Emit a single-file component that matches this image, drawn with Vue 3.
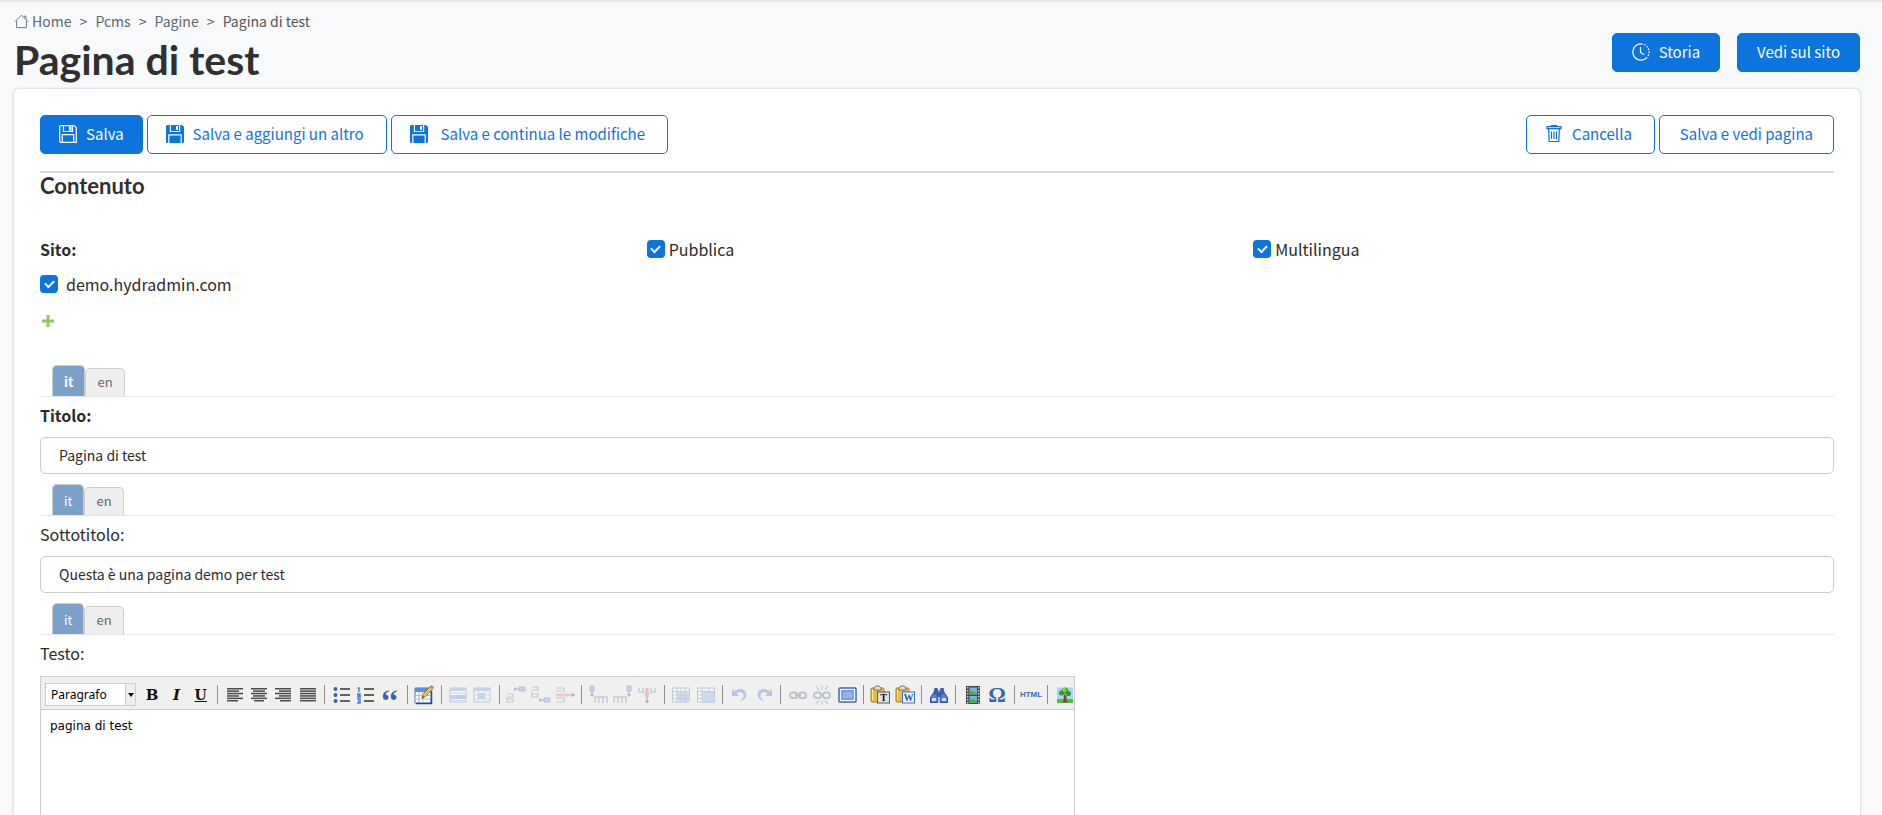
<script setup>
import { ref } from 'vue'

const crumbs = ['Home', 'Pcms', 'Pagine']
const title = ref('Pagina di test')
const subtitle = ref('Questa è una pagina demo per test')
const body = ref('pagina di test')
const demoSite = ref(true)
const published = ref(true)
const multilang = ref(true)

const groups = [
  ['bold', 'italic', 'underline'],
  ['left', 'center', 'right', 'justify'],
  ['bullets', 'numbers', 'quote'],
  ['edit'],
  ['rowProps', 'cellProps'],
  ['rowBefore', 'rowAfter', 'rowDelete'],
  ['colBefore', 'colAfter', 'colDelete'],
  ['split', 'merge'],
  ['undo', 'redo'],
  ['link', 'unlink', 'full'],
  ['pasteText', 'pasteWord'],
  ['search'],
  ['media', 'charmap'],
  ['html'],
  ['image'],
]
const disabledTools = ['rowProps', 'cellProps', 'rowBefore', 'rowAfter', 'rowDelete', 'colBefore', 'colAfter', 'colDelete', 'split', 'merge', 'undo', 'redo', 'link', 'unlink']

const lines = {
  left: [[4, 16], [4, 12], [4, 16], [4, 12], [4, 16], [4, 11]],
  center: [[4, 16], [6, 12], [4, 16], [6, 12], [4, 16], [7, 10]],
  right: [[4, 16], [8, 12], [4, 16], [8, 12], [4, 16], [9, 11]],
  justify: [[4, 16], [4, 16], [4, 16], [4, 16], [4, 16], [4, 16]],
}
const letters = { bold: 'B', italic: 'I', underline: 'U' }
</script>

<template>
  <div class="page">
    <header class="head">
      <div>
        <nav class="crumbs" aria-label="Breadcrumb">
          <svg class="home" viewBox="0 0 16 16" aria-hidden="true">
            <path d="M1 8.2 8 1.2l7 7M2.7 7v7.5h10.6V7M11 3.8V2.2h1.8v3.6" />
          </svg>
          <template v-for="c in crumbs" :key="c">
            <a href="#">{{ c }}</a><span class="sep">&gt;</span>
          </template>
          <span>Pagina di test</span>
        </nav>
        <h1>Pagina di test</h1>
      </div>
      <div class="head-actions">
        <button type="button" class="btn solid">
          <svg class="ico" viewBox="0 0 18 18" aria-hidden="true">
            <path d="M9 .9a8.1 8.1 0 1 0 5.200 14.300" />
            <path d="M9 .9a8.100 8.100 0 0 1 5.200 14.300" stroke-dasharray="1.700 1.300" />
            <path d="M8.500 4v5.500l3.800 2.300" />
          </svg>
          Storia
        </button>
        <button type="button" class="btn solid">Vedi sul sito</button>
      </div>
    </header>

    <main class="card">
      <div class="actions">
        <button type="button" class="btn solid">
          <svg class="ico" viewBox="0 0 18 18" aria-hidden="true">
            <path d="M1.500.7h13.800l2 2v14.600H1.500L.7 16.500V1.500zM4.500.9v5.600h9V.9M10.500 2v3.200h1.400V2zM3.300 17.200V9.600h11.400v7.600" />
          </svg>
          Salva
        </button>
        <button type="button" class="btn with-icon">
          <svg class="ico fill" viewBox="0 0 18 18" aria-hidden="true">
            <path d="M1 0h2.800v7h10.400V0h1.600L18 1.800V17l-1 1h-1.200V9.200H2.200V18H1l-1-1V1zM5 0h8v6H5zm5 1v4h2V1zM3.400 10.500h11.200V18H3.400z" />
          </svg>
          Salva e aggiungi un altro
        </button>
        <button type="button" class="btn with-icon wide">
          <svg class="ico fill" viewBox="0 0 18 18" aria-hidden="true">
            <path d="M1 0h2.800v7h10.400V0h1.600L18 1.800V17l-1 1h-1.200V9.200H2.200V18H1l-1-1V1zM5 0h8v6H5zm5 1v4h2V1zM3.400 10.500h11.200V18H3.400z" />
          </svg>
          Salva e continua le modifiche
        </button>
        <span class="grow"></span>
        <button type="button" class="btn with-icon">
          <svg class="ico" viewBox="0 0 18 18" aria-hidden="true">
            <path d="M2 1.700h14v2H2zM6.500 1.500V.5h5v1M3.600 4l.6 12.500h9.600L14.400 4M6.500 6.500v7.500M9 6.500v7.500M11.500 6.500v7.500" />
          </svg>
          Cancella
        </button>
        <button type="button" class="btn">Salva e vedi pagina</button>
      </div>

      <h2>Contenuto</h2>

      <div class="row">
        <fieldset class="sites">
          <legend>Sito:</legend>
          <label class="check roomy"><input v-model="demoSite" type="checkbox">demo.hydradmin.com</label>
          <button type="button" class="add" aria-label="Aggiungi">
            <svg viewBox="0 0 12 12" aria-hidden="true"><path d="M6 0v12M0 6h12" /></svg>
          </button>
        </fieldset>
        <label class="check"><input v-model="published" type="checkbox">Pubblica</label>
        <label class="check"><input v-model="multilang" type="checkbox">Multilingua</label>
      </div>

      <div class="tabs required">
        <button type="button" class="tab active">it</button><button type="button" class="tab">en</button>
      </div>
      <label class="field-label strong" for="title">Titolo:</label>
      <input id="title" v-model="title" class="text" type="text">

      <div class="tabs">
        <button type="button" class="tab active">it</button><button type="button" class="tab">en</button>
      </div>
      <label class="field-label" for="subtitle">Sottotitolo:</label>
      <input id="subtitle" v-model="subtitle" class="text" type="text">

      <div class="tabs">
        <button type="button" class="tab active">it</button><button type="button" class="tab">en</button>
      </div>
      <label class="field-label" for="body">Testo:</label>

      <div class="editor">
        <div class="toolbar">
          <div class="format">
            <select aria-label="Formato"><option>Paragrafo</option></select>
            <span class="arrow" aria-hidden="true"></span>
          </div>
          <div class="tools">
            <template v-for="(g, gi) in groups" :key="gi">
              <span v-if="gi" class="divider"></span>
              <button
                v-for="t in g" :key="t" type="button" class="tool"
                :disabled="disabledTools.includes(t)" :aria-label="t"
              >
                <span v-if="letters[t]" class="letter" :class="t">{{ letters[t] }}</span>
                <span v-else-if="t === 'charmap'" class="omega">Ω</span>
                <span v-else-if="t === 'html'" class="html">HTML</span>
                <svg v-else viewBox="0 0 24 24" aria-hidden="true">
                  <g v-if="lines[t]" fill="#4a4a50">
                    <rect v-for="(l, i) in lines[t]" :key="i" :x="l[0]" :y="5 + i * 2.400" :width="l[1]" height="1.500" />
                  </g>
                  <template v-else-if="t === 'bullets'">
                    <g fill="#3764b4"><circle cx="5.500" cy="6" r="2" /><circle cx="5.500" cy="12" r="2" /><circle cx="5.500" cy="18" r="2" /></g>
                    <path d="M10 6h10M10 12h10M10 18h10" stroke="#333" stroke-width="1.400" />
                  </template>
                  <template v-else-if="t === 'numbers'">
                    <path d="M3.500 5h1.500v4M3 11h3v1.500H4V14h3M3 16h3v4H3M4 18h2" fill="none" stroke="#4a80d8" stroke-width="1.500" />
                    <path d="M10 6h10M10 12h10M10 18h10" stroke="#333" stroke-width="1.400" />
                  </template>
                  <path v-else-if="t === 'quote'" fill="#3564b0" d="M11 7.500C6 8 4.500 11 5 14.500c.4 3.500 5.500 3 5.500 0 0-1.800-1.200-2.800-2.800-2.600C7.500 10 9 8.800 11 8.500zM19 7.500c-5 .5-6.500 3.500-6 7 .4 3.500 5.500 3 5.500 0 0-1.800-1.200-2.800-2.800-2.600-.2-1.900 1.300-3.100 3.300-3.400z" />
                  <template v-else-if="t === 'edit'">
                    <path d="M3 5h16v15H3z" fill="#fff" stroke="#5878b0" /><path d="M3 5h16v4H3z" fill="#5b8ce8" />
                    <path d="M3 12.500h15M3 16h15M7 9v10M11 9v10" stroke="#a8bce0" /><path d="M19.500 8v12.500H4" fill="none" stroke="#254a86" stroke-width="1.500" />
                    <path d="m10 15 1-3.500 7-8 2.800 2.300-7.300 8z" fill="#e9c257" stroke="#866820" stroke-width=".8" /><path d="m18 3.500 1.500-1.600 2.700 2.300L20.800 5.800z" fill="#d9786a" /><path d="m10 15 .7-2 1.500 1.200z" fill="#222" />
                  </template>
                  <template v-else-if="t === 'rowProps'">
                    <path d="M4 5h16v14H4z" fill="#fff" stroke="#5d7fb8" /><path d="M4 5h16v3H4z" fill="#7c9de0" /><path d="M3.500 12h17v4h-17z" fill="#6895e6" /><path d="M4 10h16M4 17.500h16" stroke="#9ab0d8" />
                  </template>
                  <template v-else-if="t === 'cellProps'">
                    <path d="M4 5h16v14H4z" fill="#fff" stroke="#5d7fb8" /><path d="M4 5h16v3H4z" fill="#7c9de0" /><path d="M8 10h7v6H8z" fill="#6895e6" /><path d="M4 12h16M4 16h16M8 8v11M15 8v11" stroke="#9ab0d8" />
                  </template>
                  <template v-else-if="t === 'rowBefore'">
                    <path d="M3 11h6v3H3M3 14v5h6v-3H3" fill="none" stroke="#7185ab" stroke-width="1.200" />
                    <path d="M15 4h6v4h-6z" fill="#79a1ec" stroke="#4068b0" /><path d="M15 6h-4" stroke="#444" /><path d="m9.500 6 2.500-2v4z" fill="#444" />
                  </template>
                  <template v-else-if="t === 'rowAfter'">
                    <path d="M3 4h6v3H3M3 8v6h6v-3H3" fill="none" stroke="#7185ab" stroke-width="1.200" />
                    <path d="M15 15h6v4h-6z" fill="#79a1ec" stroke="#4068b0" /><path d="M15 17h-4" stroke="#444" /><path d="m9.500 17 2.500-2v4z" fill="#444" />
                  </template>
                  <template v-else-if="t === 'rowDelete'">
                    <path d="M3 5h8v3H3M3 15h8v4H3" fill="none" stroke="#7185ab" stroke-width="1.200" />
                    <path d="M3 10.500h12v3H3z" fill="#ee7e7e" /><path d="M15 12h4" stroke="#333" /><path d="m22 12-3-2.200v4.400z" fill="#333" />
                  </template>
                  <template v-else-if="t === 'colBefore'">
                    <path d="M8 20v-6h12v6M12 14v6M16 14v6" fill="none" stroke="#7185ab" stroke-width="1.400" />
                    <path d="M3 3h4v5H3z" fill="#79a1ec" stroke="#4068b0" /><path d="M5 8v4" stroke="#444" /><path d="M5 14 3 11h4z" fill="#444" />
                  </template>
                  <template v-else-if="t === 'colAfter'">
                    <path d="M3 20v-6h12v6M7 14v6M11 14v6" fill="none" stroke="#7185ab" stroke-width="1.400" />
                    <path d="M16 3h4v5h-4z" fill="#79a1ec" stroke="#4068b0" /><path d="M18 8v4" stroke="#444" /><path d="m18 14-2-3h4z" fill="#444" />
                  </template>
                  <template v-else-if="t === 'colDelete'">
                    <path d="M4 5v4h4V5M16 5v4h4V5" fill="none" stroke="#7185ab" stroke-width="1.400" />
                    <path d="M10.500 5h3v9h-3z" fill="#f06060" stroke="#999" stroke-width=".6" /><path d="M8 9l2.500 3M16 9l-2.500 3" stroke="#7185ab" /><path d="M12 14v4" stroke="#333" /><path d="m12 20.500-2.200-3h4.400z" fill="#333" />
                  </template>
                  <template v-else-if="t === 'split'">
                    <path d="M3.500 5h17v14h-17z" fill="#fff" stroke="#5d7fb8" /><path d="M8 9h12.500v10H8z" fill="#94b3ee" /><path d="M3.500 8.500h17M3.500 12h17M3.500 15.500h17M8 5v14M12 5v14M16 5v14" stroke="#7892c0" />
                  </template>
                  <template v-else-if="t === 'merge'">
                    <path d="M3.500 5h17v14h-17z" fill="#fff" stroke="#5d7fb8" /><path d="M8 9h12.500v10H8z" fill="#8fb2f3" stroke="#6c8cd0" /><path d="M3.500 8.500h17M3.500 12H8M3.500 15.500H8M8 5v4M15 5v4" stroke="#7892c0" />
                  </template>
                  <path v-else-if="t === 'undo'" d="M4 6v7h7L8.600 10.500c4-3 7.400-1 6.900 2.500-.3 2-1.500 3.500-3.500 5.500 4.500-1.500 6.500-4 6.300-7C18 6 11.500 4 6.400 8.400z" fill="#3f74e0" />
                  <path v-else-if="t === 'redo'" d="M20 6v7h-7l2.400-2.500c-4-3-7.400-1-6.900 2.500.3 2 1.500 3.500 3.500 5.500-4.500-1.500-6.500-4-6.300-7C6 6 12.500 4 17.600 8.400z" fill="#3f74e0" />
                  <template v-else-if="t === 'link' || t === 'unlink'">
                    <g fill="none" stroke="#5f7290" stroke-width="2">
                      <rect x="4" y="9.500" width="7" height="5.500" rx="2.600" /><rect x="13" y="9.500" width="7" height="5.500" rx="2.600" />
                      <path v-if="t === 'link'" d="M9 12.200h6" />
                    </g>
                    <path v-if="t === 'unlink'" d="m6 3 3 4M12 2v5M18 3l-3 4M6 21l3-4M12 22v-5M18 21l-3-4" stroke="#8b929c" stroke-width="1.300" />
                  </template>
                  <template v-else-if="t === 'full'">
                    <rect x="4" y="5" width="17" height="14" rx="1" fill="#fff" stroke="#3768bd" stroke-width="1.500" /><rect x="6.800" y="7.800" width="11.400" height="8.400" fill="#8db5f5" stroke="#4679d2" />
                  </template>
                  <template v-else-if="t === 'pasteText' || t === 'pasteWord'">
                    <rect x="3" y="5" width="13" height="14" rx="1" fill="#edbb45" stroke="#a87a20" /><path d="M6 7V5l2-2h3l2 2v2z" fill="#e5e0d0" stroke="#77705c" />
                    <path d="M4.500 7v10" stroke="#fff0a0" />
                    <rect x="9.500" y="9" width="12" height="11" :fill="t === 'pasteText' ? '#e2e2e2' : '#f4f8ff'" :stroke="t === 'pasteText' ? '#555' : '#3d6abb'" />
                    <text x="15.500" y="18" text-anchor="middle" :fill="t === 'pasteText' ? '#111' : '#2456b4'" class="mark">{{ t === 'pasteText' ? 'T' : 'W' }}</text>
                  </template>
                  <template v-else-if="t === 'search'">
                    <path d="m6 11 1.500-6h3L12 9l1.500-4h3L18 11zM10 10h4v4h-4z" fill="#3c65ae" />
                    <path d="M3.500 19.500v-5L6 10.500h3.500l1.300 3.500v5.500zM20.500 19.500v-5L18 10.500h-3.500L13.200 14v5.500z" fill="#5782ce" stroke="#2d4f90" /><path d="M5 16.500h4M15 16.500h4" stroke="#e4edfb" stroke-width="2.500" />
                  </template>
                  <template v-else-if="t === 'media'">
                    <path d="M5 3h14v18H5z" fill="#474747" /><path d="M8.500 4.500h7.500v7H8.500zM8.500 13h7.500v7H8.500z" fill="#6db7ec" /><path d="m8.500 11.500 0-3 3-1 4.500 3v1zM8.500 20v-3l4-1.500 3.500 3V20z" fill="#4fb04a" />
                    <path d="M6.700 4v17M17.700 4v17" stroke="#ddd" stroke-width="1.300" stroke-dasharray="1.500 1.500" />
                  </template>
                  <template v-else-if="t === 'image'">
                    <path d="M3.500 4h17v16h-17z" fill="#a8d4f8" stroke="#e8f0f8" /><path d="M4 16h16v4H4z" fill="#58b83c" />
                    <path d="M10.800 12h2.600l.3 6 1.800 1.500H8.800l1.800-1.500z" fill="#804a22" />
                    <circle cx="12" cy="8" r="3.500" fill="#4daa30" /><circle cx="8.500" cy="10" r="2.500" fill="#3c9028" /><circle cx="15.500" cy="10.500" r="2.500" fill="#3c9028" /><circle cx="11" cy="7" r="2" fill="#83cf4b" />
                  </template>
                </svg>
              </button>
            </template>
          </div>
        </div>
        <textarea id="body" v-model="body"></textarea>
      </div>
    </main>
  </div>
</template>

<style>
body {
  margin: 0;
  background: #f8f9fb;
}
</style>

<style scoped>
* {
  box-sizing: border-box;
}
.page {
  min-height: 100vh;
  display: flex;
  flex-direction: column;
  border-top: 2px solid #e6e9ea;
  padding: 0 22px 0 14px;
  font-family: "Noto Sans CJK SC", "Open Sans", sans-serif;
  font-size: 16px;
  line-height: 24px;
  color: #2b2b2b;
}
button, input, textarea, select {
  font: inherit;
  margin: 0;
}
.head {
  display: flex;
  justify-content: space-between;
  height: 87px;
}
.crumbs {
  display: flex;
  align-items: center;
  height: 20px;
  margin-top: 9px;
  font-size: 14px;
  line-height: 20px;
  color: #555;
}
.crumbs a {
  color: #5d6770;
  text-decoration: none;
}
.crumbs .sep {
  width: 24px;
  text-align: center;
}
.home {
  width: 15px;
  height: 15px;
  margin-right: 3px;
  fill: none;
  stroke: #6b747c;
}
h1, h2 {
  margin: 0;
  font-family: Lato, "Open Sans", sans-serif;
  font-weight: 700;
  color: #303030;
}
h1 {
  font-size: 41px;
  line-height: 48px;
  margin-top: 5px;
}
.head-actions {
  display: flex;
  gap: 17px;
  margin-top: 31px;
}
.btn {
  display: inline-flex;
  align-items: center;
  gap: 9px;
  height: 39px;
  padding: 0 20px 2px;
  border: 1px solid #0d74de;
  border-radius: 5px;
  background: #fff;
  color: #0d74de;
  font-size: 15px;
  line-height: 24px;
  white-space: nowrap;
}
.btn.with-icon {
  padding: 0 22px 2px 18px;
}
.btn.wide {
  gap: 13px;
}
.btn.solid {
  padding: 0 18px 2px;
  background: #0d74de;
  color: #fff;
}
.head-actions .btn.solid {
  padding: 0 19px 2px;
}
.ico {
  width: 18px;
  height: 18px;
  fill: none;
  stroke: currentColor;
  stroke-width: 1.2;
}
.ico.fill {
  fill: currentColor;
  fill-rule: evenodd;
  stroke: none;
}
.card {
  flex: 1;
  display: flex;
  flex-direction: column;
  padding: 26px 26px 0;
  border-radius: 5px 5px 0 0;
  background: #fff;
  box-shadow: 0 0 3px rgba(0, 0, 0, .25);
}
.actions {
  display: flex;
  gap: 4px;
  padding-bottom: 17px;
  border-bottom: 2px solid #d9d9d9;
}
.grow {
  flex: 1;
}
h2 {
  font-size: 22px;
  line-height: 26px;
}
.row {
  display: grid;
  grid-template-columns: repeat(3, 1fr);
  gap: 26px;
  align-items: start;
  margin-top: 38px;
}
.sites {
  display: flex;
  flex-direction: column;
  gap: 13px;
  margin: 0;
  padding: 0;
  border: 0;
}
legend {
  padding: 0;
  margin-bottom: 11px;
  font-weight: 700;
}
.check {
  display: flex;
  align-items: center;
  gap: 4px;
}
.check.roomy {
  gap: 8px;
}
.check input {
  appearance: none;
  width: 18px;
  height: 18px;
  border-radius: 4px;
  background: #0d74de;
  display: grid;
  place-items: center;
}
.check input:checked::before {
  content: "";
  width: 7px;
  height: 4px;
  border: solid #fff;
  border-width: 0 0 2px 2px;
  transform: translateY(-1px) rotate(-45deg);
}
.add {
  display: block;
  width: 16px;
  height: 24px;
  padding: 0 0 0 2px;
  border: 0;
  background: none;
}
.add svg {
  display: block;
  width: 12px;
  height: 12px;
  stroke: #8ccb5c;
  stroke-width: 3;
}
.tabs {
  display: flex;
  align-items: flex-end;
  height: 32px;
  margin-top: 10px;
  padding-left: 12px;
  border-bottom: 1px solid #e6e6e6;
}
.tabs.required {
  margin-top: 32px;
}
.tab {
  height: 28px;
  padding: 0 11px 2px;
  border: 1px solid #ccc;
  border-bottom: 0;
  border-radius: 5px 5px 0 0;
  background: #eee;
  color: #666;
  font-size: 13px;
  line-height: 24px;
}
.tab.active {
  height: 31px;
  padding: 1px 11px 0;
  background: #7ba0c9;
  color: #fff;
}
.required .active {
  font-weight: 700;
}
.field-label {
  margin: 6px 0 10px;
  align-self: flex-start;
}
.strong {
  font-weight: 700;
}
.text {
  width: 100%;
  height: 37px;
  padding: 0 18px 2px;
  border: 1px solid #ccc;
  border-radius: 5px;
  background: #fff;
  color: #2b2b2b;
  font-size: 14px;
}
.editor {
  flex: 1;
  display: flex;
  flex-direction: column;
  width: 100%;
  max-width: 1035px;
  margin-top: 1px;
  border: solid #ccc;
  border-width: 1px 1px 0;
}
.toolbar {
  display: flex;
  align-items: center;
  height: 33px;
  padding: 3px 0 0 4px;
  overflow: hidden;
  border-bottom: 1px solid #ccc;
  background: #f0f0ee;
}
.format {
  display: flex;
  flex: none;
  width: 91px;
  height: 23px;
  margin-right: 4px;
  border: 1px solid #ccc;
  background: #fff;
}
.format select {
  flex: 1;
  min-width: 0;
  appearance: none;
  padding: 0 0 0 5px;
  border: 0;
  background: #fff;
  color: #000;
  font: 12px/20px "Noto Sans", sans-serif;
}
.arrow {
  display: grid;
  place-items: center;
  width: 10px;
  border-left: 1px solid #ccc;
  background: #eee;
}
.arrow::before {
  content: "";
  border: 3px solid transparent;
  border-top: 4px solid #000;
  border-bottom: 0;
}
.tools {
  display: flex;
  flex: 1;
  align-items: center;
  margin-right: -3px;
}
.tool {
  flex: 5 1 0;
  min-width: 0;
  height: 24px;
  display: flex;
  align-items: center;
  justify-content: center;
  padding: 0;
  border: 0;
  background: none;
  color: #111;
}
.tool:disabled {
  opacity: .35;
}
.tool svg {
  flex: none;
  width: 24px;
  height: 24px;
}
.divider {
  flex: 2 1 0;
  height: 19px;
  background: linear-gradient(#8c8c94, #8c8c94) center / 1px 100% no-repeat;
}
.letter {
  font: 700 15px/20px "DejaVu Serif", serif;
}
.italic {
  font-style: italic;
}
.underline {
  font-size: 14px;
  text-decoration: underline;
}
.omega {
  font: 700 22px/22px "Liberation Serif", serif;
  color: #3764bd;
}
.html {
  font: 700 8px/20px "Liberation Sans", sans-serif;
  color: #4468b4;
}
.mark {
  font: 700 10px "Liberation Serif", serif;
}
textarea {
  flex: 1;
  width: 100%;
  min-height: 100px;
  padding: 7px 9px;
  border: 0;
  resize: none;
  outline: 0;
  background: #fff;
  color: #000;
  font: 12px/18px "DejaVu Sans", sans-serif;
}
</style>
